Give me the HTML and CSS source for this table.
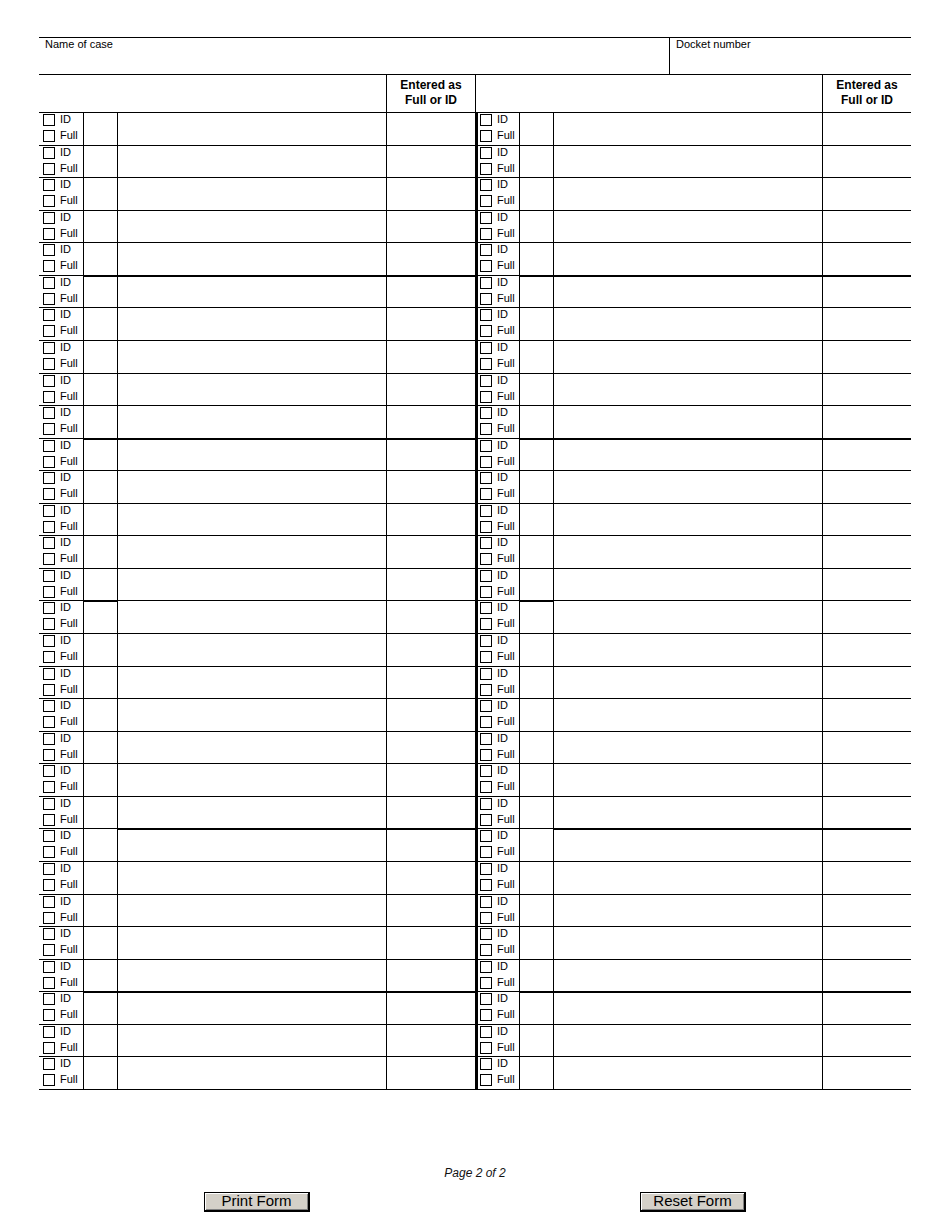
FILE: index.html
```
<!DOCTYPE html>
<html>
<head>
<meta charset="utf-8">
<link rel="stylesheet" href="styles.css">
</head>
<body>
<div class="page">
  <div class="case">
    <div class="case-name">Name of case</div>
    <div class="case-docket">Docket number</div>
  </div>
  <div class="thead">
    <div class="th-blank"></div>
    <div class="th-ent">Entered as<br>Full or ID</div>
    <div class="th-blank th-right"></div>
    <div class="th-ent">Entered as<br>Full or ID</div>
  </div>
  <div class="tbody">
    <div class="row"><div class="c chk"><div class="opt"><span class="box"></span>ID</div><div class="opt"><span class="box"></span>Full</div></div><div class="c sm"></div><div class="c main"></div><div class="c ent"></div><div class="c chk sep"><div class="opt"><span class="box"></span>ID</div><div class="opt"><span class="box"></span>Full</div></div><div class="c sm"></div><div class="c main"></div><div class="c ent"></div></div>
    <div class="row"><div class="c chk"><div class="opt"><span class="box"></span>ID</div><div class="opt"><span class="box"></span>Full</div></div><div class="c sm"></div><div class="c main"></div><div class="c ent"></div><div class="c chk sep"><div class="opt"><span class="box"></span>ID</div><div class="opt"><span class="box"></span>Full</div></div><div class="c sm"></div><div class="c main"></div><div class="c ent"></div></div>
    <div class="row"><div class="c chk"><div class="opt"><span class="box"></span>ID</div><div class="opt"><span class="box"></span>Full</div></div><div class="c sm"></div><div class="c main"></div><div class="c ent"></div><div class="c chk sep"><div class="opt"><span class="box"></span>ID</div><div class="opt"><span class="box"></span>Full</div></div><div class="c sm"></div><div class="c main"></div><div class="c ent"></div></div>
    <div class="row"><div class="c chk"><div class="opt"><span class="box"></span>ID</div><div class="opt"><span class="box"></span>Full</div></div><div class="c sm"></div><div class="c main"></div><div class="c ent"></div><div class="c chk sep"><div class="opt"><span class="box"></span>ID</div><div class="opt"><span class="box"></span>Full</div></div><div class="c sm"></div><div class="c main"></div><div class="c ent"></div></div>
    <div class="row"><div class="c chk"><div class="opt"><span class="box"></span>ID</div><div class="opt"><span class="box"></span>Full</div></div><div class="c sm"></div><div class="c main"></div><div class="c ent"></div><div class="c chk sep"><div class="opt"><span class="box"></span>ID</div><div class="opt"><span class="box"></span>Full</div></div><div class="c sm"></div><div class="c main"></div><div class="c ent"></div></div>
    <div class="row tk-mid"><div class="c chk"><div class="opt"><span class="box"></span>ID</div><div class="opt"><span class="box"></span>Full</div></div><div class="c sm"></div><div class="c main"></div><div class="c ent"></div><div class="c chk sep"><div class="opt"><span class="box"></span>ID</div><div class="opt"><span class="box"></span>Full</div></div><div class="c sm"></div><div class="c main"></div><div class="c ent"></div></div>
    <div class="row"><div class="c chk"><div class="opt"><span class="box"></span>ID</div><div class="opt"><span class="box"></span>Full</div></div><div class="c sm"></div><div class="c main"></div><div class="c ent"></div><div class="c chk sep"><div class="opt"><span class="box"></span>ID</div><div class="opt"><span class="box"></span>Full</div></div><div class="c sm"></div><div class="c main"></div><div class="c ent"></div></div>
    <div class="row"><div class="c chk"><div class="opt"><span class="box"></span>ID</div><div class="opt"><span class="box"></span>Full</div></div><div class="c sm"></div><div class="c main"></div><div class="c ent"></div><div class="c chk sep"><div class="opt"><span class="box"></span>ID</div><div class="opt"><span class="box"></span>Full</div></div><div class="c sm"></div><div class="c main"></div><div class="c ent"></div></div>
    <div class="row"><div class="c chk"><div class="opt"><span class="box"></span>ID</div><div class="opt"><span class="box"></span>Full</div></div><div class="c sm"></div><div class="c main"></div><div class="c ent"></div><div class="c chk sep"><div class="opt"><span class="box"></span>ID</div><div class="opt"><span class="box"></span>Full</div></div><div class="c sm"></div><div class="c main"></div><div class="c ent"></div></div>
    <div class="row"><div class="c chk"><div class="opt"><span class="box"></span>ID</div><div class="opt"><span class="box"></span>Full</div></div><div class="c sm"></div><div class="c main"></div><div class="c ent"></div><div class="c chk sep"><div class="opt"><span class="box"></span>ID</div><div class="opt"><span class="box"></span>Full</div></div><div class="c sm"></div><div class="c main"></div><div class="c ent"></div></div>
    <div class="row tk-mid"><div class="c chk"><div class="opt"><span class="box"></span>ID</div><div class="opt"><span class="box"></span>Full</div></div><div class="c sm"></div><div class="c main"></div><div class="c ent"></div><div class="c chk sep"><div class="opt"><span class="box"></span>ID</div><div class="opt"><span class="box"></span>Full</div></div><div class="c sm"></div><div class="c main"></div><div class="c ent"></div></div>
    <div class="row"><div class="c chk"><div class="opt"><span class="box"></span>ID</div><div class="opt"><span class="box"></span>Full</div></div><div class="c sm"></div><div class="c main"></div><div class="c ent"></div><div class="c chk sep"><div class="opt"><span class="box"></span>ID</div><div class="opt"><span class="box"></span>Full</div></div><div class="c sm"></div><div class="c main"></div><div class="c ent"></div></div>
    <div class="row"><div class="c chk"><div class="opt"><span class="box"></span>ID</div><div class="opt"><span class="box"></span>Full</div></div><div class="c sm"></div><div class="c main"></div><div class="c ent"></div><div class="c chk sep"><div class="opt"><span class="box"></span>ID</div><div class="opt"><span class="box"></span>Full</div></div><div class="c sm"></div><div class="c main"></div><div class="c ent"></div></div>
    <div class="row"><div class="c chk"><div class="opt"><span class="box"></span>ID</div><div class="opt"><span class="box"></span>Full</div></div><div class="c sm"></div><div class="c main"></div><div class="c ent"></div><div class="c chk sep"><div class="opt"><span class="box"></span>ID</div><div class="opt"><span class="box"></span>Full</div></div><div class="c sm"></div><div class="c main"></div><div class="c ent"></div></div>
    <div class="row"><div class="c chk"><div class="opt"><span class="box"></span>ID</div><div class="opt"><span class="box"></span>Full</div></div><div class="c sm"></div><div class="c main"></div><div class="c ent"></div><div class="c chk sep"><div class="opt"><span class="box"></span>ID</div><div class="opt"><span class="box"></span>Full</div></div><div class="c sm"></div><div class="c main"></div><div class="c ent"></div></div>
    <div class="row tk-sm"><div class="c chk"><div class="opt"><span class="box"></span>ID</div><div class="opt"><span class="box"></span>Full</div></div><div class="c sm"></div><div class="c main"></div><div class="c ent"></div><div class="c chk sep"><div class="opt"><span class="box"></span>ID</div><div class="opt"><span class="box"></span>Full</div></div><div class="c sm"></div><div class="c main"></div><div class="c ent"></div></div>
    <div class="row"><div class="c chk"><div class="opt"><span class="box"></span>ID</div><div class="opt"><span class="box"></span>Full</div></div><div class="c sm"></div><div class="c main"></div><div class="c ent"></div><div class="c chk sep"><div class="opt"><span class="box"></span>ID</div><div class="opt"><span class="box"></span>Full</div></div><div class="c sm"></div><div class="c main"></div><div class="c ent"></div></div>
    <div class="row"><div class="c chk"><div class="opt"><span class="box"></span>ID</div><div class="opt"><span class="box"></span>Full</div></div><div class="c sm"></div><div class="c main"></div><div class="c ent"></div><div class="c chk sep"><div class="opt"><span class="box"></span>ID</div><div class="opt"><span class="box"></span>Full</div></div><div class="c sm"></div><div class="c main"></div><div class="c ent"></div></div>
    <div class="row"><div class="c chk"><div class="opt"><span class="box"></span>ID</div><div class="opt"><span class="box"></span>Full</div></div><div class="c sm"></div><div class="c main"></div><div class="c ent"></div><div class="c chk sep"><div class="opt"><span class="box"></span>ID</div><div class="opt"><span class="box"></span>Full</div></div><div class="c sm"></div><div class="c main"></div><div class="c ent"></div></div>
    <div class="row"><div class="c chk"><div class="opt"><span class="box"></span>ID</div><div class="opt"><span class="box"></span>Full</div></div><div class="c sm"></div><div class="c main"></div><div class="c ent"></div><div class="c chk sep"><div class="opt"><span class="box"></span>ID</div><div class="opt"><span class="box"></span>Full</div></div><div class="c sm"></div><div class="c main"></div><div class="c ent"></div></div>
    <div class="row"><div class="c chk"><div class="opt"><span class="box"></span>ID</div><div class="opt"><span class="box"></span>Full</div></div><div class="c sm"></div><div class="c main"></div><div class="c ent"></div><div class="c chk sep"><div class="opt"><span class="box"></span>ID</div><div class="opt"><span class="box"></span>Full</div></div><div class="c sm"></div><div class="c main"></div><div class="c ent"></div></div>
    <div class="row"><div class="c chk"><div class="opt"><span class="box"></span>ID</div><div class="opt"><span class="box"></span>Full</div></div><div class="c sm"></div><div class="c main"></div><div class="c ent"></div><div class="c chk sep"><div class="opt"><span class="box"></span>ID</div><div class="opt"><span class="box"></span>Full</div></div><div class="c sm"></div><div class="c main"></div><div class="c ent"></div></div>
    <div class="row tk-main"><div class="c chk"><div class="opt"><span class="box"></span>ID</div><div class="opt"><span class="box"></span>Full</div></div><div class="c sm"></div><div class="c main"></div><div class="c ent"></div><div class="c chk sep"><div class="opt"><span class="box"></span>ID</div><div class="opt"><span class="box"></span>Full</div></div><div class="c sm"></div><div class="c main"></div><div class="c ent"></div></div>
    <div class="row"><div class="c chk"><div class="opt"><span class="box"></span>ID</div><div class="opt"><span class="box"></span>Full</div></div><div class="c sm"></div><div class="c main"></div><div class="c ent"></div><div class="c chk sep"><div class="opt"><span class="box"></span>ID</div><div class="opt"><span class="box"></span>Full</div></div><div class="c sm"></div><div class="c main"></div><div class="c ent"></div></div>
    <div class="row"><div class="c chk"><div class="opt"><span class="box"></span>ID</div><div class="opt"><span class="box"></span>Full</div></div><div class="c sm"></div><div class="c main"></div><div class="c ent"></div><div class="c chk sep"><div class="opt"><span class="box"></span>ID</div><div class="opt"><span class="box"></span>Full</div></div><div class="c sm"></div><div class="c main"></div><div class="c ent"></div></div>
    <div class="row"><div class="c chk"><div class="opt"><span class="box"></span>ID</div><div class="opt"><span class="box"></span>Full</div></div><div class="c sm"></div><div class="c main"></div><div class="c ent"></div><div class="c chk sep"><div class="opt"><span class="box"></span>ID</div><div class="opt"><span class="box"></span>Full</div></div><div class="c sm"></div><div class="c main"></div><div class="c ent"></div></div>
    <div class="row"><div class="c chk"><div class="opt"><span class="box"></span>ID</div><div class="opt"><span class="box"></span>Full</div></div><div class="c sm"></div><div class="c main"></div><div class="c ent"></div><div class="c chk sep"><div class="opt"><span class="box"></span>ID</div><div class="opt"><span class="box"></span>Full</div></div><div class="c sm"></div><div class="c main"></div><div class="c ent"></div></div>
    <div class="row tk-mid"><div class="c chk"><div class="opt"><span class="box"></span>ID</div><div class="opt"><span class="box"></span>Full</div></div><div class="c sm"></div><div class="c main"></div><div class="c ent"></div><div class="c chk sep"><div class="opt"><span class="box"></span>ID</div><div class="opt"><span class="box"></span>Full</div></div><div class="c sm"></div><div class="c main"></div><div class="c ent"></div></div>
    <div class="row"><div class="c chk"><div class="opt"><span class="box"></span>ID</div><div class="opt"><span class="box"></span>Full</div></div><div class="c sm"></div><div class="c main"></div><div class="c ent"></div><div class="c chk sep"><div class="opt"><span class="box"></span>ID</div><div class="opt"><span class="box"></span>Full</div></div><div class="c sm"></div><div class="c main"></div><div class="c ent"></div></div>
    <div class="row last"><div class="c chk"><div class="opt"><span class="box"></span>ID</div><div class="opt"><span class="box"></span>Full</div></div><div class="c sm"></div><div class="c main"></div><div class="c ent"></div><div class="c chk sep"><div class="opt"><span class="box"></span>ID</div><div class="opt"><span class="box"></span>Full</div></div><div class="c sm"></div><div class="c main"></div><div class="c ent"></div></div>
  </div>
  <div class="pagenum">Page 2 of 2</div>
  <div class="buttons">
    <button class="btn" type="button">Print Form</button>
    <button class="btn" type="button">Reset Form</button>
  </div>
</div>
</body>
</html>
```
FILE: styles.css
```
html, body {
  margin: 0;
  padding: 0;
  background: #fff;
}
body {
  font-family: "Liberation Sans", Arial, sans-serif;
  color: #000;
}
.page {
  width: 872px;
  padding: 37px 0 0 39px;
}
.case {
  display: flex;
  height: 38px;
  box-sizing: border-box;
  border-top: 1px solid #000;
  border-bottom: 1px solid #000;
}
.case-name {
  width: 631px;
  box-sizing: border-box;
  border-right: 1px solid #000;
  padding: 0 6px;
  font-size: 11px;
}
.case-docket {
  flex: 1;
  padding: 0 6px;
  font-size: 11px;
}
.thead {
  display: grid;
  grid-template-columns: 347px 89px 347px 89px;
  height: 37px;
}
.th-ent {
  box-sizing: border-box;
  border-left: 1px solid #000;
  display: flex;
  align-items: center;
  justify-content: center;
  text-align: center;
  font-weight: bold;
  font-size: 12px;
  line-height: 15px;
  padding-bottom: 2px;
}
.th-right {
  box-sizing: border-box;
  border-left: 1px solid #000;
}
.row {
  display: grid;
  grid-template-columns: 44px 34px 269px 89px 44px 34px 269px 89px;
  height: 32.567px;
}
.c {
  box-sizing: border-box;
  border-top: 1px solid #000;
}
.row.last .c {
  border-bottom: 1px solid #000;
}
.sm, .main, .ent {
  border-left: 1px solid #000;
}
.sep {
  border-left: 3px solid #000;
}
.tk-mid .sm, .tk-mid .main, .tk-mid .ent {
  border-top-width: 2px;
}
.tk-sm .sm {
  border-top-width: 2px;
}
.tk-main .main, .tk-main .ent {
  border-top-width: 2px;
}
.chk {
  display: flex;
  flex-direction: column;
  padding: 0 0 0 4px;
}
.chk.sep {
  padding-left: 2px;
}
.opt {
  display: flex;
  align-items: flex-start;
  height: 16px;
  font-size: 11px;
  line-height: 12px;
}
.opt:first-child {
  padding-top: 0;
}
.opt + .opt {
  padding-top: 0;
}
.box {
  width: 12px;
  height: 12px;
  box-sizing: border-box;
  border: 1px solid #000;
  background: #fff;
  margin: 1px 5px 0 0;
  flex: none;
}
.pagenum {
  margin-top: 77px;
  text-align: center;
  font-style: italic;
  font-size: 12px;
  line-height: 14px;
  color: #111;
}
.buttons {
  display: flex;
  justify-content: space-between;
  padding: 0 165px;
  margin-top: 12px;
}
.btn {
  width: 106px;
  height: 20px;
  padding: 0;
  margin: 0;
  background: #d4d0c8;
  border: 2px solid #000;
  border-top-width: 1px;
  border-left-width: 1px;
  box-shadow: inset 1px 1px 0 #fff, inset -1px -1px 0 #808080;
  font-family: "Liberation Sans", Arial, sans-serif;
  font-size: 15px;
  line-height: 16px;
  color: #000;
}
```
